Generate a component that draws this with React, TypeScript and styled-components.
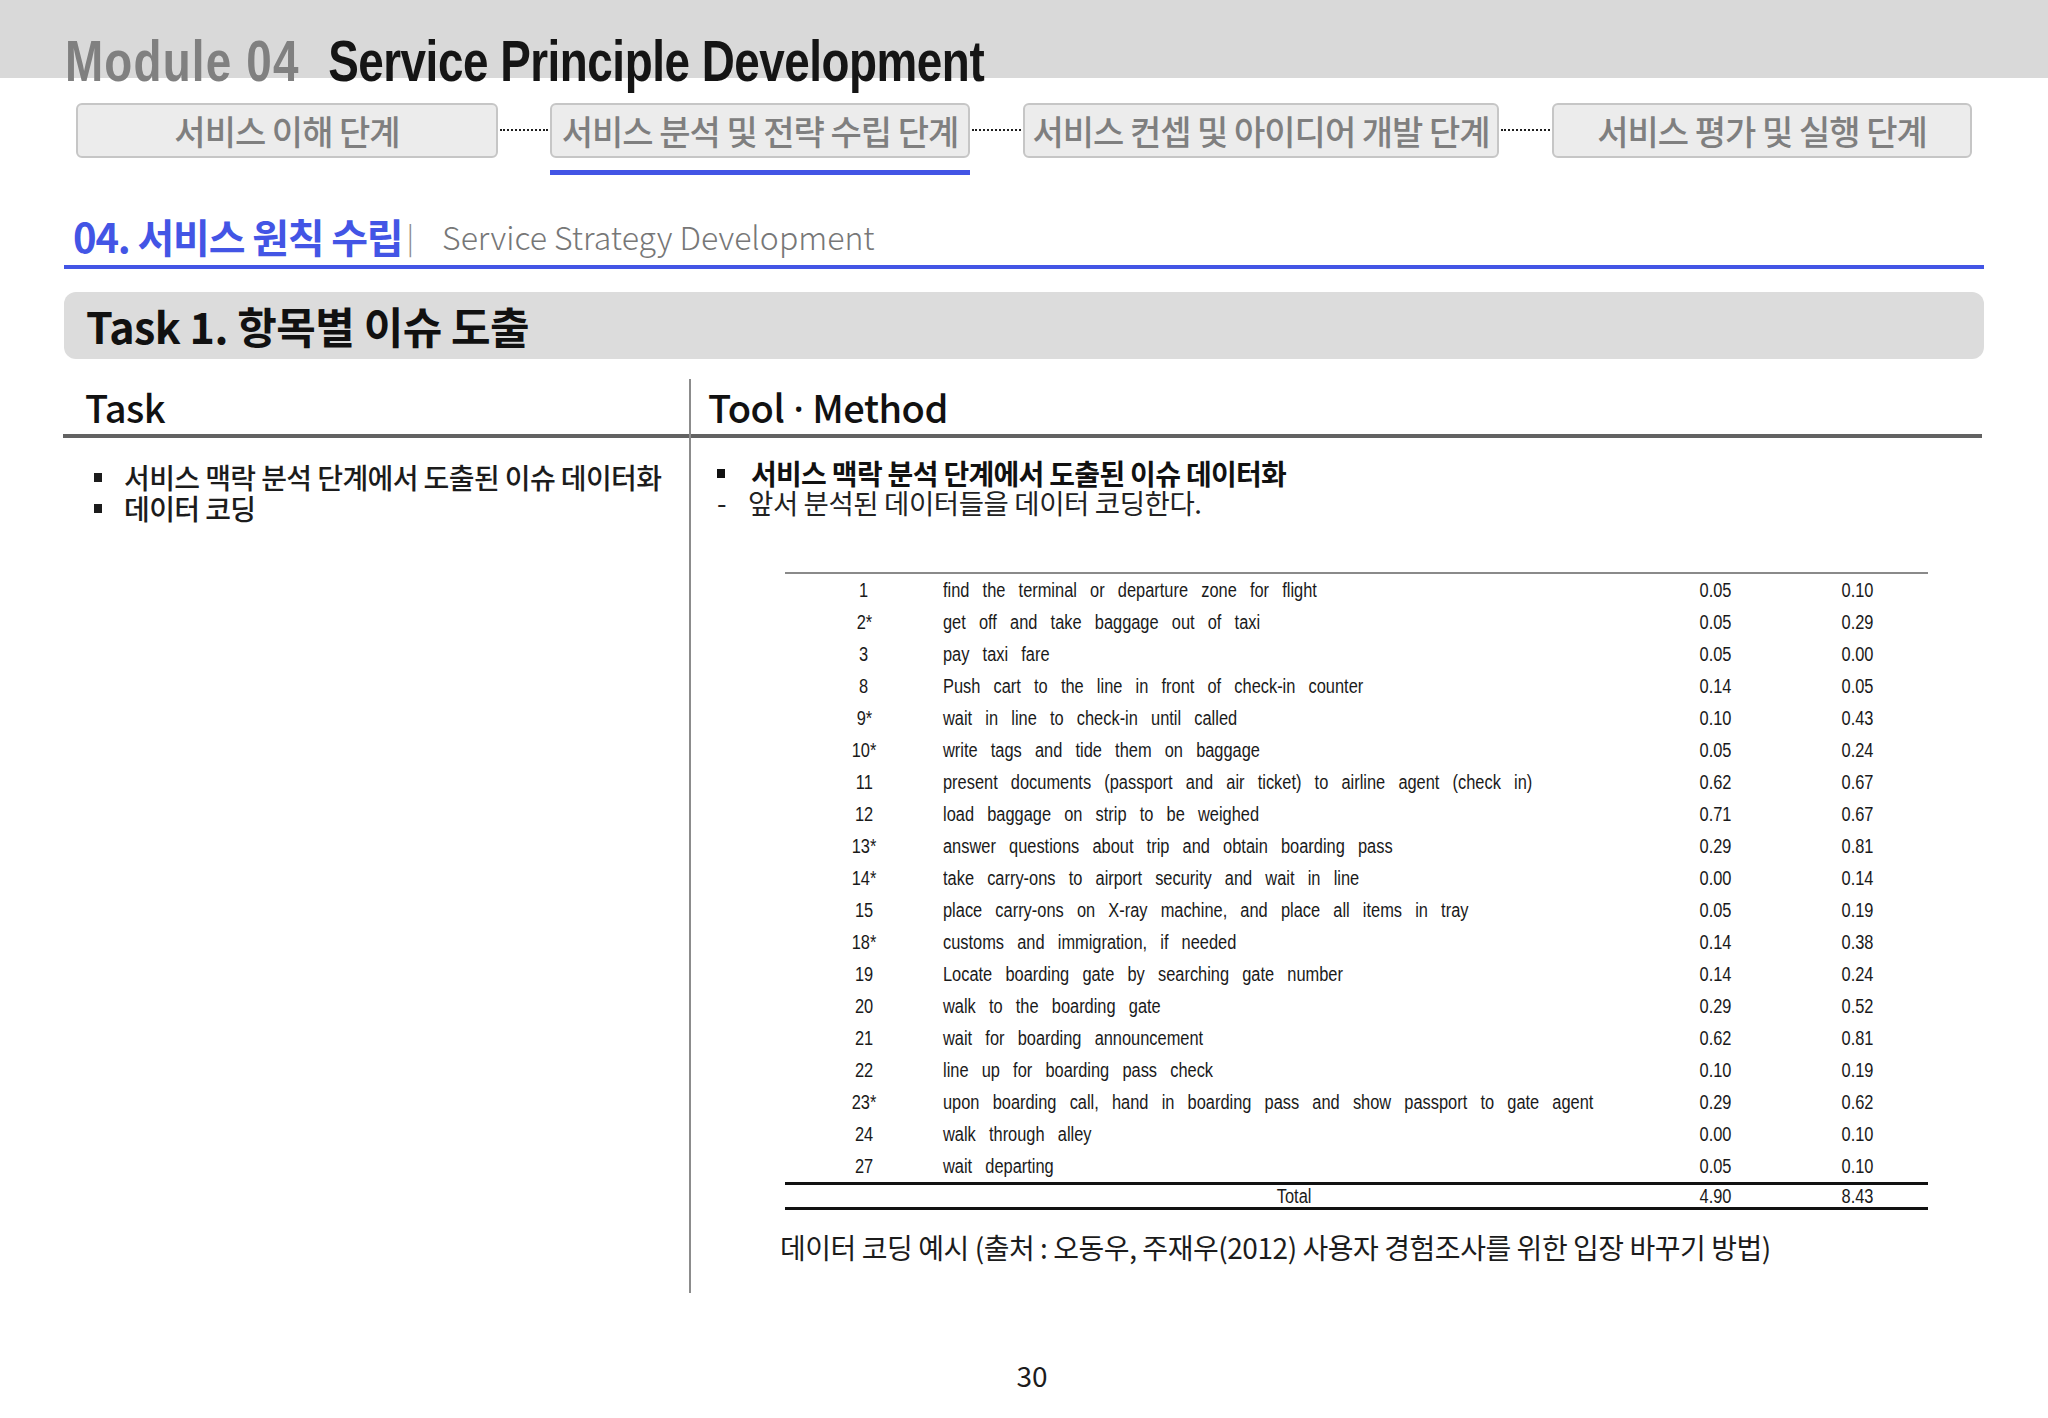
import React from 'react';
import styled, { createGlobalStyle } from 'styled-components';

const KR = `"Noto Sans CJK KR", "Noto Sans", sans-serif`;
const ARIAL = `"Liberation Sans", Arial, sans-serif`;
const BLUE = '#4355e5';

const Global = createGlobalStyle`
  html, body { margin: 0; padding: 0; background: #fff; }
  body { font-family: ${KR}; color: #111; }
  * { box-sizing: border-box; }
`;

const Page = styled.div`
  width: 2048px;
  height: 1418px;
  overflow: hidden;
  background: #fff;
`;

const TopBand = styled.header`
  height: 78px;
  background: #d9d9d9;
  padding: 32px 0 0 65px;
`;

const Title = styled.h1`
  margin: 0;
  display: inline-flex;
  gap: 36px;
  font-family: ${ARIAL};
  font-weight: 700;
  font-size: 58px;
  line-height: 58px;
  color: #151515;
  white-space: nowrap;
  letter-spacing: -0.6px;
  transform: scaleX(0.79);
  transform-origin: left center;
`;

const TitleMuted = styled.span`
  color: #808080;
  letter-spacing: 1.5px;
`;

const Stages = styled.nav`
  display: flex;
  align-items: flex-start;
  margin: 25px 0 0 76px;
`;

const StageCol = styled.div<{ $w: number }>`
  width: ${(p) => p.$w}px;
  display: flex;
  flex-direction: column;
`;

const StageBox = styled.div`
  height: 55px;
  border: 2px solid #c6c6c6;
  border-radius: 6px;
  background: #ececec;
  display: flex;
  align-items: center;
  justify-content: center;
  font-size: 34px;
  font-weight: 500;
  color: #7f7f7f;
  letter-spacing: -1px;
  white-space: nowrap;
`;

const StageBar = styled.div<{ $on?: boolean }>`
  height: 5px;
  margin-top: 12px;
  background: ${(p) => (p.$on ? BLUE : 'transparent')};
`;

const Connector = styled.div<{ $w: number }>`
  width: ${(p) => p.$w}px;
  margin-top: 26px;
  padding: 0 2px;
  &::before {
    content: '';
    display: block;
    border-top: 2px dotted #1e1e1e;
  }
`;

const SectionHead = styled.div`
  margin: 36px 64px 0;
  height: 58px;
  padding: 0 0 4px 9px;
  border-bottom: 4px solid ${BLUE};
  display: flex;
  align-items: center;
  white-space: nowrap;
`;

const SectionTitle = styled.span`
  font-size: 40px;
  line-height: 50px;
  font-weight: 700;
  color: ${BLUE};
  letter-spacing: -1.2px;
`;

const Pipe = styled.span`
  font-size: 30px;
  font-weight: 300;
  color: #8a8a8a;
  margin: 0 28px 0 4px;
`;

const SectionSub = styled.span`
  font-size: 32px;
  line-height: 50px;
  font-weight: 300;
  color: #777;
`;

const TaskBanner = styled.div`
  margin: 23px 64px 0;
  height: 67px;
  border-radius: 12px;
  background: #dcdcdc;
  padding-left: 22px;
  font-size: 43px;
  line-height: 67px;
  font-weight: 700;
  color: #111;
  letter-spacing: -0.5px;
`;

const Columns = styled.section`
  margin: 20px 0 0 63px;
  width: 1919px;
  height: 914px;
  display: grid;
  grid-template-columns: 628px 1fr;
`;

const LeftCol = styled.div`
  border-right: 2px solid #8c8c8c;
`;

const RightCol = styled.div``;

const ColHead = styled.div<{ $pad: number }>`
  height: 59px;
  padding-left: ${(p) => p.$pad}px;
  border-bottom: 4px solid #626262;
  font-size: 38px;
  line-height: 55px;
  font-weight: 500;
  color: #111;
  letter-spacing: -0.5px;
  white-space: nowrap;
`;

const MidDot = styled.span`
  font-family: "Noto Sans", sans-serif;
  margin: 0 1px;
`;

const BulletList = styled.ul`
  list-style: none;
  margin: 0;
  padding: 24px 0 0 31px;
`;

const BulletItem = styled.li`
  display: flex;
  align-items: center;
  font-size: 28px;
  line-height: 31px;
  font-weight: 500;
  color: #1c1c1c;
  letter-spacing: -0.6px;
  white-space: nowrap;
  &::before {
    content: '';
    flex: none;
    width: 8px;
    height: 9px;
    margin: 0 22px 0 0;
    background: #1c1c1c;
  }
`;

const MethodBlock = styled.div`
  padding: 21px 53px 0 26px;
`;

const MethodItem = styled.div`
  display: flex;
  align-items: center;
  font-size: 28px;
  line-height: 29px;
  font-weight: 700;
  color: #111;
  letter-spacing: -0.7px;
  white-space: nowrap;
  &::before {
    content: '';
    flex: none;
    width: 8px;
    height: 9px;
    margin-right: 26px;
    background: #111;
  }
`;

const MethodNote = styled.div`
  display: flex;
  align-items: center;
  font-size: 27.5px;
  line-height: 29px;
  font-weight: 400;
  color: #222;
  letter-spacing: -0.4px;
  white-space: nowrap;
`;

const Dash = styled.span`
  width: 31px;
  flex: none;
`;

const Table = styled.div`
  margin: 55px 0 0 68px;
  width: 1143px;
  border-top: 2px solid #8a8a8a;
  font-family: ${ARIAL};
  font-size: 20px;
  color: #1a1a1a;
`;

const Row = styled.div<{ $total?: boolean }>`
  display: grid;
  grid-template-columns: 158px 702px 141px 142px;
  height: ${(p) => (p.$total ? 28 : 32)}px;
  align-items: center;
  ${(p) =>
    p.$total
      ? `border-top: 3px solid #111; border-bottom: 3px solid #111;`
      : ''}
`;

const Cell = styled.span<{ $left?: boolean }>`
  text-align: ${(p) => (p.$left ? 'left' : 'center')};
  white-space: nowrap;
  min-width: 0;
`;

const CellText = styled.span<{ $left?: boolean }>`
  display: inline-block;
  transform: scaleX(0.82);
  transform-origin: ${(p) => (p.$left ? 'left' : 'center')} center;
  word-spacing: ${(p) => (p.$left ? '10.5px' : '0')};
`;

const Caption = styled.p`
  margin: 19px 0 0 63px;
  font-size: 28px;
  line-height: 36px;
  font-weight: 400;
  color: #1c1c1c;
  letter-spacing: -0.45px;
  white-space: nowrap;
`;

const PageNum = styled.footer`
  margin-top: 67px;
  padding-left: 16px;
  text-align: center;
  font-size: 28px;
  line-height: 30px;
  font-weight: 400;
  color: #1c1c1c;
`;

const stages = [
  { label: '서비스 이해 단계', w: 422 },
  { label: '서비스 분석 및 전략 수립 단계', w: 420, on: true },
  { label: '서비스 컨셉 및 아이디어 개발 단계', w: 476 },
  { label: '서비스 평가 및 실행 단계', w: 420 },
];
const gaps = [52, 53, 53];

const rows: [string, string, string, string][] = [
  ['1', 'find the terminal or departure zone for flight', '0.05', '0.10'],
  ['2*', 'get off and take baggage out of taxi', '0.05', '0.29'],
  ['3', 'pay taxi fare', '0.05', '0.00'],
  ['8', 'Push cart to the line in front of check-in counter', '0.14', '0.05'],
  ['9*', 'wait in line to check-in until called', '0.10', '0.43'],
  ['10*', 'write tags and tide them on baggage', '0.05', '0.24'],
  ['11', 'present documents (passport and air ticket) to airline agent (check in)', '0.62', '0.67'],
  ['12', 'load baggage on strip to be weighed', '0.71', '0.67'],
  ['13*', 'answer questions about trip and obtain boarding pass', '0.29', '0.81'],
  ['14*', 'take carry-ons to airport security and wait in line', '0.00', '0.14'],
  ['15', 'place carry-ons on X-ray machine, and place all items in tray', '0.05', '0.19'],
  ['18*', 'customs and immigration, if needed', '0.14', '0.38'],
  ['19', 'Locate boarding gate by searching gate number', '0.14', '0.24'],
  ['20', 'walk to the boarding gate', '0.29', '0.52'],
  ['21', 'wait for boarding announcement', '0.62', '0.81'],
  ['22', 'line up for boarding pass check', '0.10', '0.19'],
  ['23*', 'upon boarding call, hand in boarding pass and show passport to gate agent', '0.29', '0.62'],
  ['24', 'walk through alley', '0.00', '0.10'],
  ['27', 'wait departing', '0.05', '0.10'],
];

export default function App() {
  return (
    <Page>
      <Global />
      <TopBand>
        <Title>
          <TitleMuted>Module 04</TitleMuted>
          <span>Service Principle Development</span>
        </Title>
      </TopBand>

      <Stages>
        {stages.map((s, i) => (
          <React.Fragment key={s.label}>
            <StageCol $w={s.w}>
              <StageBox>{s.label}</StageBox>
              <StageBar $on={s.on} />
            </StageCol>
            {i < gaps.length && <Connector $w={gaps[i]} />}
          </React.Fragment>
        ))}
      </Stages>

      <SectionHead>
        <SectionTitle>04. 서비스 원칙 수립</SectionTitle>
        <Pipe>|</Pipe>
        <SectionSub>Service Strategy Development</SectionSub>
      </SectionHead>

      <TaskBanner>Task 1. 항목별 이슈 도출</TaskBanner>

      <Columns>
        <LeftCol>
          <ColHead $pad={22}>Task</ColHead>
          <BulletList>
            <BulletItem>서비스 맥락 분석 단계에서 도출된 이슈 데이터화</BulletItem>
            <BulletItem>데이터 코딩</BulletItem>
          </BulletList>
        </LeftCol>
        <RightCol>
          <ColHead $pad={17}>
            Tool <MidDot>·</MidDot> Method
          </ColHead>
          <MethodBlock>
            <MethodItem>서비스 맥락 분석 단계에서 도출된 이슈 데이터화</MethodItem>
            <MethodNote>
              <Dash>-</Dash>앞서 분석된 데이터들을 데이터 코딩한다.
            </MethodNote>
            <Table>
              {rows.map((r) => (
                <Row key={r[0]}>
                  <Cell><CellText>{r[0]}</CellText></Cell>
                  <Cell $left><CellText $left>{r[1]}</CellText></Cell>
                  <Cell><CellText>{r[2]}</CellText></Cell>
                  <Cell><CellText>{r[3]}</CellText></Cell>
                </Row>
              ))}
              <Row $total>
                <Cell />
                <Cell><CellText>Total</CellText></Cell>
                <Cell><CellText>4.90</CellText></Cell>
                <Cell><CellText>8.43</CellText></Cell>
              </Row>
            </Table>
            <Caption>
              데이터 코딩 예시 (출처 : 오동우, 주재우(2012) 사용자 경험조사를 위한 입장 바꾸기 방법)
            </Caption>
          </MethodBlock>
        </RightCol>
      </Columns>

      <PageNum>30</PageNum>
    </Page>
  );
}
